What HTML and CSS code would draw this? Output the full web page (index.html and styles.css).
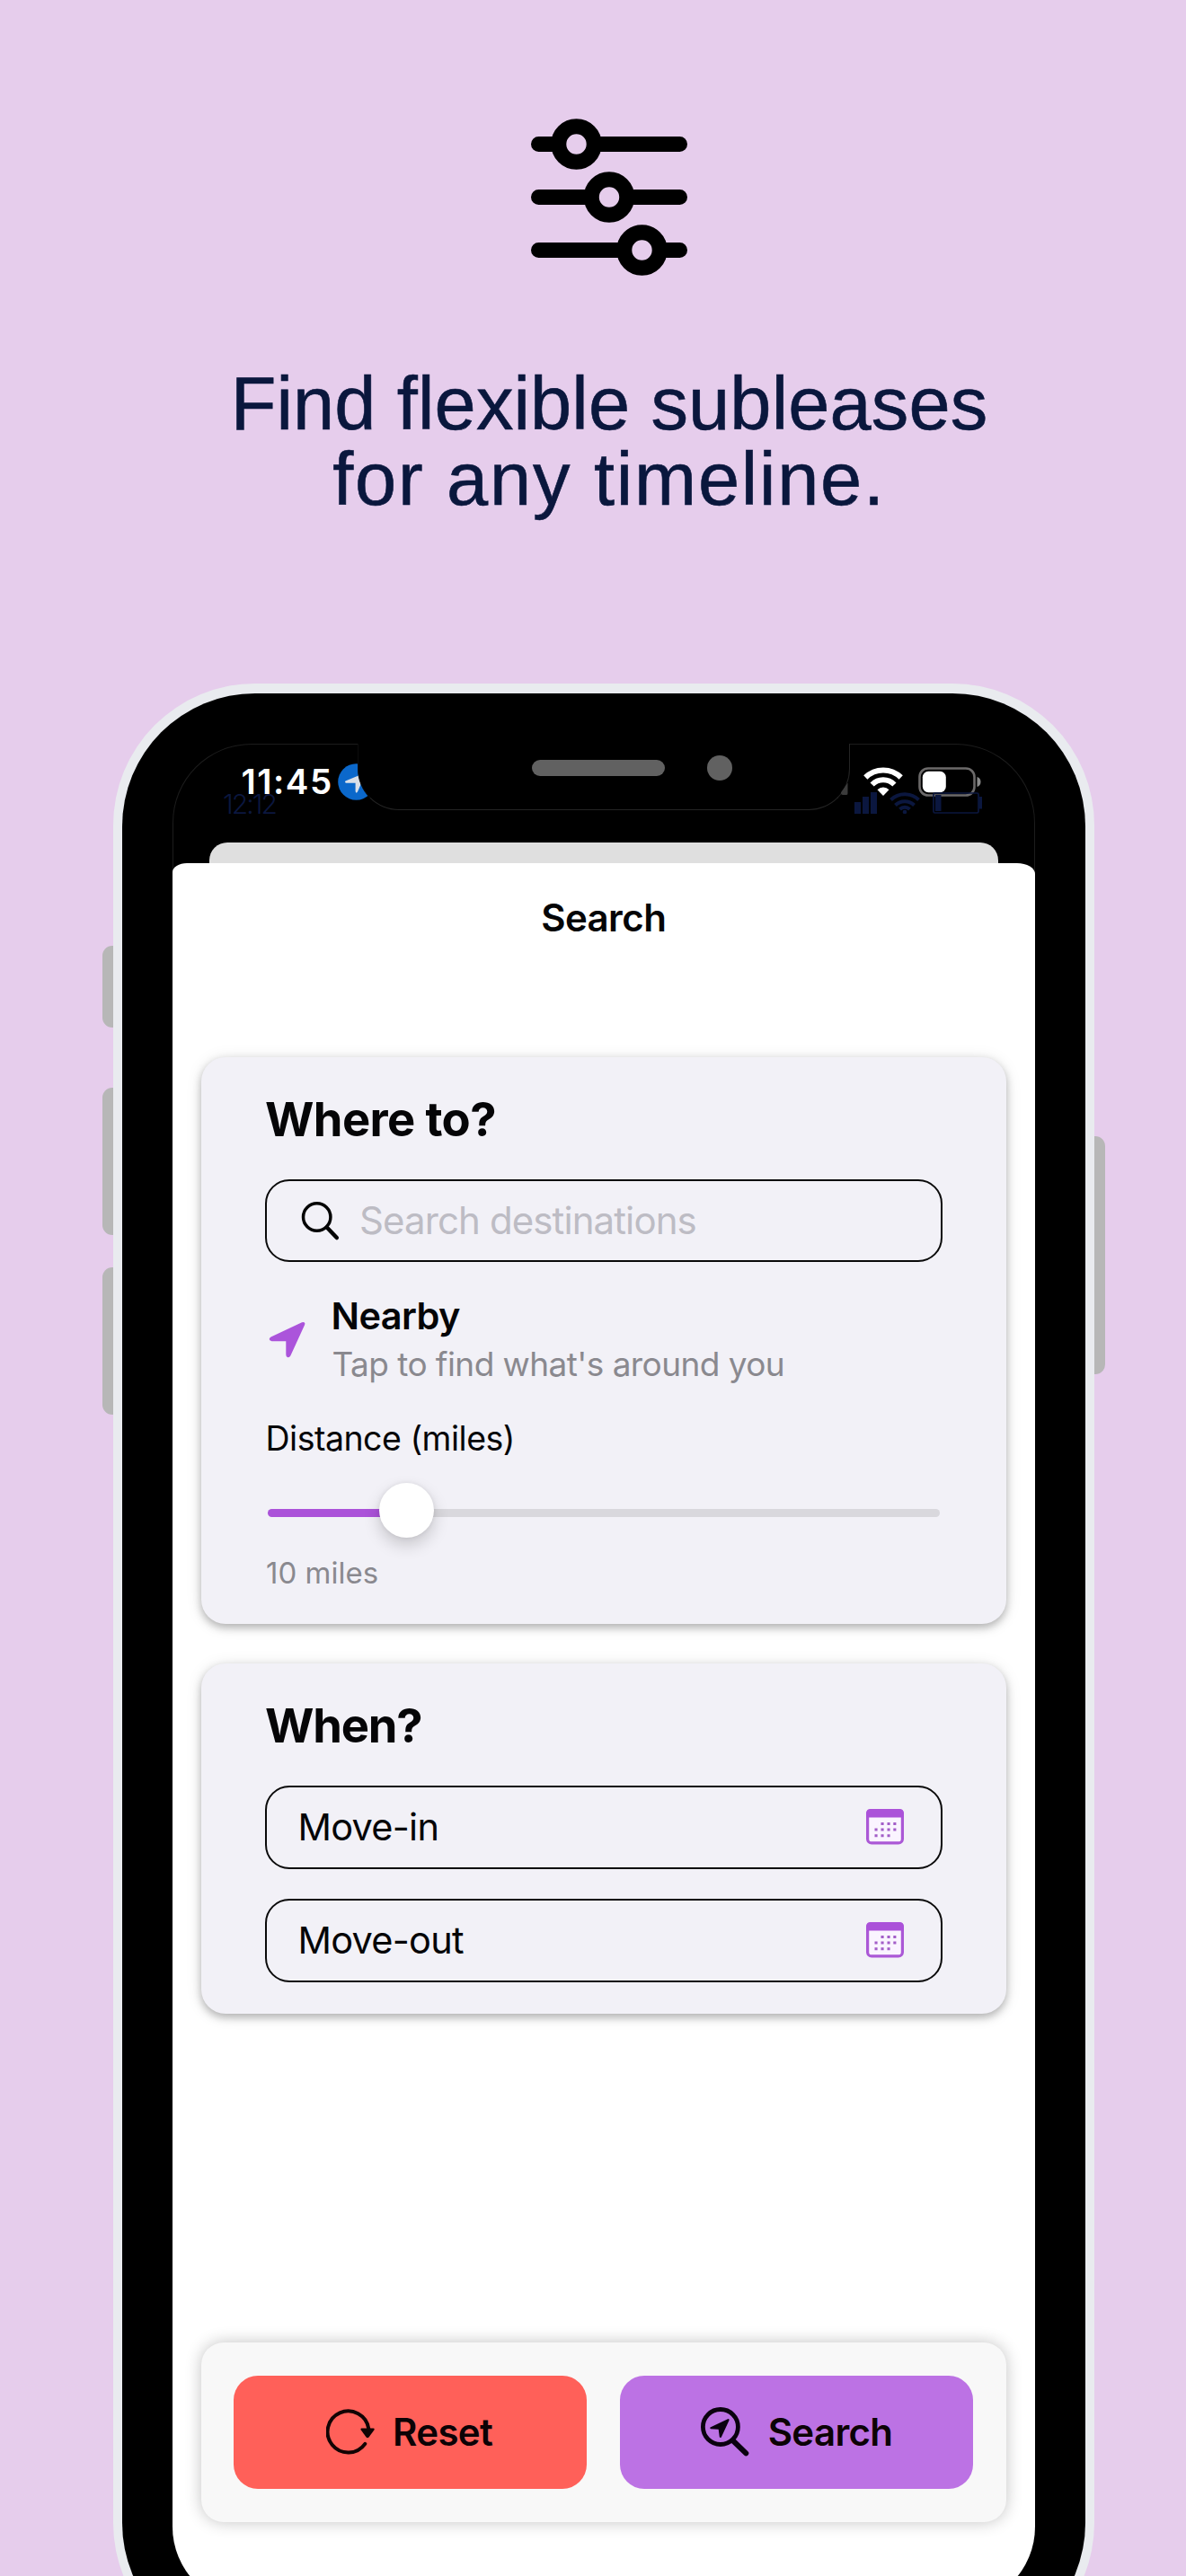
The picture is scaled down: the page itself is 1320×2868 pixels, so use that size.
FILE: index.html
```html
<!DOCTYPE html>
<html lang="en">
<head>
<meta charset="utf-8">
<title>Find flexible subleases</title>
<link rel="stylesheet" href="styles.css">
</head>
<body>
<header class="hero">
  <svg class="hero-icon" width="174" height="176" viewBox="0 0 174 176" fill="none" stroke="#000">
    <path d="M8.500 28.500H165.500M8.500 87.500H165.500M8.500 146.500H165.500" stroke-width="17" stroke-linecap="round"/>
    <g fill="#e6cdec" stroke-width="17">
      <circle cx="50.500" cy="28.500" r="19.700"/>
      <circle cx="87" cy="87.500" r="19.700"/>
      <circle cx="123.500" cy="146.500" r="19.700"/>
    </g>
  </svg>
  <h1 class="hero-title"><span>Find flexible subleases</span><span class="line-two">for any timeline.</span></h1>
</header>

<div class="phone">
  <i class="side-key key-mute"></i>
  <i class="side-key key-up"></i>
  <i class="side-key key-down"></i>
  <i class="side-key key-power"></i>
  <div class="bezel">
    <div class="screen">
      <div class="status">
        <div class="status-time">
          <span>11:45</span>
          <svg width="41" height="41" viewBox="0 0 41 41"><circle cx="20.500" cy="20.500" r="20.300" fill="#0b68cb"/><path d="M8.500 19.500 29 11q2-.7 1.200 1.500L22 31.500q-1.600 2.500-2.400-.5V21.800H9q-2-1-.5-2.300Z" fill="#d9dfe8"/></svg>
        </div>
        <div class="status-icons">
          <svg width="44" height="32" viewBox="0 0 44 32">
            <g fill="none" stroke="#fff" stroke-width="6"><path d="M2.300 11.500a28 28 0 0 1 39.400 0"/><path d="M9.600 19.500a17.500 17.500 0 0 1 24.800 0"/></g>
            <path d="M22 32l-6.500-6.800a9 9 0 0 1 13 0Z" fill="#fff"/>
          </svg>
          <svg width="70" height="33" viewBox="0 0 70 33">
            <rect x="1.500" y="1.500" width="61" height="30" rx="9.500" fill="none" stroke="#6c6a6a" stroke-width="2.600"/>
            <rect x="4.800" y="4.800" width="26" height="23.400" rx="6.500" fill="#fff"/>
            <path d="M65.500 11q4 1.200 4 5.500t-4 5.500Z" fill="#8a8a8a"/>
          </svg>
        </div>
        <div class="ghost">
          <span>12:12</span>
          <svg width="142" height="24" viewBox="0 0 142 24" fill="#0b173f">
            <path d="M0 11h7v13H0zM9 5h7v19H9zM18 0h7v24h-7z"/>
            <g fill="none" stroke="#0b173f" stroke-width="4"><path d="M40.500 8.500a22.500 22.500 0 0 1 31 0"/><path d="M45.500 14.500a15 15 0 0 1 21 0"/><path d="M50.500 19a8 8 0 0 1 11 0"/></g>
            <circle cx="56" cy="22" r="2.300"/>
            <rect x="88" y="1" width="50" height="22" rx="1.500" fill="none" stroke="#0b173f" stroke-width="1.700"/>
            <path d="M90 3h6.500v18H90zM138.500 5h3.500v13.500h-3.500z"/>
          </svg>
        </div>
        <div class="notch"><i class="speaker"></i><i class="camera"></i></div>
        <i class="signal-edge"></i>
      </div>
      <div class="back-sheet"></div>
      <main class="sheet">
        <h2 class="sheet-title">Search</h2>

        <section class="card card-where">
          <h3 class="card-title">Where to?</h3>
          <div class="field search-field">
            <svg width="44" height="46" viewBox="0 0 44 46" fill="none" stroke="#050505" stroke-linecap="round"><circle cx="18.700" cy="19" r="15.200" stroke-width="3.500"/><path d="M29.800 30.500 40.800 42" stroke-width="4.500"/></svg>
            <span class="placeholder">Search destinations</span>
          </div>
          <div class="nearby">
            <svg width="41" height="41" viewBox="0 0 41 41"><path d="M2.500 17.500 37 1.200q4.500-1 3 3L24.300 38.500Q23 40.800 20.800 40 19.300 39.300 19.300 37V22.200H3.500Q-1.500 20.500 2.500 17.500Z" fill="#ab54db"/></svg>
            <div class="nearby-text"><strong>Nearby</strong><span>Tap to find what's around you</span></div>
          </div>
          <div class="distance-label">Distance (miles)</div>
          <div class="slider"><i class="slider-fill"></i><i class="slider-thumb"></i><i class="slider-rest"></i></div>
          <div class="distance-value">10 miles</div>
        </section>

        <section class="card card-when">
          <h3 class="card-title when-title">When?</h3>
          <div class="field date-field"><span>Move-in</span>
            <svg width="42" height="40" viewBox="0 0 42 40"><rect x="1.600" y="1.600" width="38.800" height="36.300" rx="4.500" fill="#faf4ff" stroke="#ab58d6" stroke-width="3.200"/><path d="M0 9.500V5q0-5 5-5h32q5 0 5 5v4.500Z" fill="#ab52d9"/><path d="M18 16.500h.1M25 16.500h.1M31.800 16.500h.1M11 23h.1M18 23h.1M25 23h.1M31.800 23h.1M11 29.700h.1M18 29.700h.1M25 29.700h.1" stroke="#a25dc8" stroke-width="3" stroke-linecap="square"/></svg>
          </div>
          <div class="field date-field"><span>Move-out</span>
            <svg width="42" height="40" viewBox="0 0 42 40"><rect x="1.600" y="1.600" width="38.800" height="36.300" rx="4.500" fill="#faf4ff" stroke="#ab58d6" stroke-width="3.200"/><path d="M0 9.500V5q0-5 5-5h32q5 0 5 5v4.500Z" fill="#ab52d9"/><path d="M18 16.500h.1M25 16.500h.1M31.800 16.500h.1M11 23h.1M18 23h.1M25 23h.1M31.800 23h.1M11 29.700h.1M18 29.700h.1M25 29.700h.1" stroke="#a25dc8" stroke-width="3" stroke-linecap="square"/></svg>
          </div>
        </section>

        <div class="actions">
          <button class="action reset" type="button">
            <svg width="54" height="52" viewBox="0 0 54 52"><path d="M47.300 22A23 23 0 1 0 43.300 38.800" fill="none" stroke="#120404" stroke-width="4" stroke-linecap="round"/><path d="M39.500 21.500h13q1.800.3.900 2L47.500 31.500q-1.500 1.500-2.900 0L38.800 23.500q-1-1.600.7-2Z" fill="#120404"/></svg>
            <span>Reset</span>
          </button>
          <button class="action search" type="button">
            <svg width="54" height="55" viewBox="0 0 54 55"><circle cx="21.900" cy="22" r="19.500" fill="none" stroke="#0b0210" stroke-width="4.800"/><path d="M36.500 38 50.300 51.300" fill="none" stroke="#0b0210" stroke-width="6" stroke-linecap="round"/><path d="M10.500 22.500 30 13.200q2-.5 1.500 1.600L22.800 33.500q-1.200 1.200-2-.3L19.700 24.700 11 24.200q-1.500-.8-.5-1.700Z" fill="#0b0210"/></svg>
            <span>Search</span>
          </button>
        </div>
      </main>
    </div>
  </div>
</div>
</body>
</html>
```
FILE: styles.css
```css
* { box-sizing: border-box; }

body {
  margin: 0;
  width: 1320px;
  height: 2868px;
  overflow: hidden;
  background: #e6cdec;
  font-family: Inter, "Liberation Sans", sans-serif;
  color: #050507;
}

i { display: block; }
svg { display: block; flex: none; }
h1, h2, h3 { margin: 0; }

/* Headline */
.hero {
  height: 761px;
  padding: 131.5px 0 0 36px;
  display: flex;
  flex-direction: column;
  align-items: center;
}
.hero-title {
  margin-top: 100.500px;
  display: flex;
  flex-direction: column;
  align-items: center;
  font: 400 83px/84px "Liberation Sans", sans-serif;
  letter-spacing: .13px;
  color: #0a173d;
  -webkit-text-stroke: .6px #0a173d;
}
.line-two { letter-spacing: 1.750px; }

/* Phone body */
.phone {
  position: relative;
  width: 1092.500px;
  height: 2206px;
  margin-left: 125.500px;
  padding: 10.500px;
  border-radius: 158px;
  background: #e9ebef;
}
.bezel {
  height: 100%;
  padding: 56px;
  border-radius: 148px;
  background: #000;
}
.side-key {
  position: absolute;
  left: -11.500px;
  width: 11.500px;
  border-radius: 11px 0 0 11px;
  background: #b7b7b7;
}
.key-mute { top: 292px; height: 90.500px; }
.key-up { top: 450px; height: 164px; }
.key-down { top: 650px; height: 164px; }
.key-power {
  top: 504px;
  left: 1092.500px;
  height: 264.500px;
  border-radius: 0 11px 11px 0;
}

.screen {
  height: 100%;
  overflow: hidden;
  border-radius: 88px;
  background: #000;
  box-shadow: inset 0 0 0 1px #1c1c1c;
}

/* Status bar */
.status {
  position: relative;
  height: 110.500px;
  padding: 22.500px 60px 0 76.500px;
  display: flex;
  justify-content: space-between;
}
.status-time {
  display: flex;
  gap: 5px;
  height: 41px;
  color: #fff;
  font-size: 38.500px;
  font-weight: 600;
  line-height: 41px;
  letter-spacing: 1.500px;
}
.status-icons {
  display: flex;
  gap: 17px;
  padding-top: 3.500px;
}
.ghost {
  position: absolute;
  top: 54px;
  left: 56px;
  width: 844.500px;
  height: 24px;
  display: flex;
  justify-content: space-between;
  color: #0b173f;
  font-size: 30px;
  font-weight: 300;
  line-height: 26px;
  letter-spacing: -2px;
}
.notch {
  position: absolute;
  top: 0;
  left: 206px;
  width: 548px;
  height: 74.500px;
  padding: 13px 0 0 192.500px;
  display: flex;
  gap: 46.500px;
  border: 1px solid #242424;
  border-top: 0;
  border-left-color: #0c0c0c;
  border-radius: 0 0 46px 46px;
  background: #000;
}
.speaker {
  width: 148.500px;
  height: 18.500px;
  margin-top: 5px;
  border-radius: 10px;
  background: #616161;
}
.camera {
  width: 28px;
  height: 28px;
  border-radius: 50%;
  background: #616161;
}
.signal-edge {
  position: absolute;
  top: 44px;
  left: 743.500px;
  width: 8px;
  height: 13.500px;
  border-radius: 0 0 2px 2px;
  background: #3b3b3b;
  clip-path: polygon(100% 0, 100% 100%, 0 100%, 0 85%);
}

/* Sheets */
.back-sheet {
  height: 22.500px;
  margin: 0 41px;
  border-radius: 20px 20px 0 0;
  background: #dfdfdf;
}
.sheet {
  height: 1960px;
  padding: 31px 31.500px 0;
  border-radius: 16px 20px 0 0 / 10px 12px 0 0;
  background: #fff;
}
.sheet-title {
  font-size: 42px;
  font-weight: 600;
  line-height: 60px;
  letter-spacing: -.6px;
  text-align: center;
}

.card {
  padding: 37px 71px 0;
  border-radius: 27px;
  background: #f2f1f7;
  box-shadow: 0 4px 10px rgba(0, 0, 0, .26), 0 2px 18px rgba(0, 0, 0, .1);
}
.card-where { height: 631px; margin-top: 125px; }
.card-when { height: 390px; margin-top: 44.700px; }
.card-title {
  padding-left: .5px;
  font-size: 52.500px;
  font-weight: 700;
  line-height: 64px;
  letter-spacing: -.62px;
}
.when-title { letter-spacing: -1.200px; }

.field {
  display: flex;
  align-items: center;
  width: 754px;
  height: 92.500px;
  border: 2px solid #0a0a0a;
  border-radius: 27px;
}
.search-field { margin-top: 35px; padding-left: 37px; gap: 22.500px; }
.placeholder {
  color: #bdbcc4;
  font-size: 42px;
  letter-spacing: -.9px;
}

.nearby {
  display: flex;
  gap: 30px;
  margin-top: 35px;
  padding-left: 4px;
}
.nearby > svg { margin-top: 31px; }
.nearby-text {
  display: flex;
  flex-direction: column;
  gap: 4px;
  line-height: 50px;
}
.nearby-text strong {
  margin-left: -1px;
  font-size: 41.500px;
  font-weight: 600;
  letter-spacing: -.59px;
}
.nearby-text span {
  color: #8a898f;
  font-size: 37px;
  letter-spacing: -.57px;
}

.distance-label {
  margin-top: 33px;
  padding-left: 1px;
  font-size: 37.500px;
  line-height: 50px;
  letter-spacing: -.5px;
}
.slider {
  display: flex;
  align-items: center;
  width: 748px;
  height: 62px;
  margin: 23.500px 0 0 3px;
}
.slider-fill {
  width: 150px;
  height: 9px;
  margin: 6px -26px 0 0;
  border-radius: 5px;
  background: #ab52d9;
}
.slider-thumb {
  z-index: 1;
  width: 61px;
  height: 61px;
  border-radius: 50%;
  background: #fff;
  box-shadow: 0 8px 18px rgba(0, 0, 0, .18), 0 0 5px rgba(0, 0, 0, .08);
}
.slider-rest {
  flex: 1;
  height: 9px;
  margin: 6px 0 0 -20px;
  border-radius: 5px;
  background: #d9d8dd;
}
.distance-value {
  margin-top: 16.500px;
  padding-left: 1.500px;
  color: #8a898f;
  font-size: 33px;
  line-height: 44px;
}

.card-title + .date-field { margin-top: 35px; }
.date-field {
  justify-content: space-between;
  margin-top: 33.500px;
  padding: 0 40.500px 0 35px;
  font-size: 41.500px;
  letter-spacing: -.75px;
}

/* Bottom actions */
.actions {
  display: flex;
  gap: 36.400px;
  height: 199.500px;
  margin-top: 366px;
  padding: 36.500px 36px;
  border-radius: 25px;
  background: #f8f8f8;
  box-shadow: 0 0 18px rgba(0, 0, 0, .24);
}
.action {
  flex: none;
  width: 393.800px;
  display: flex;
  align-items: center;
  padding: 0;
  border: 0;
  border-radius: 27px;
  color: #0c0306;
  font: 600 42px Inter, sans-serif;
  letter-spacing: -.65px;
}
.reset { padding-left: 103.500px; gap: 20px; background: #ff6059; }
.search { padding-left: 90.500px; gap: 20.500px; background: #bc72e4; }
```
